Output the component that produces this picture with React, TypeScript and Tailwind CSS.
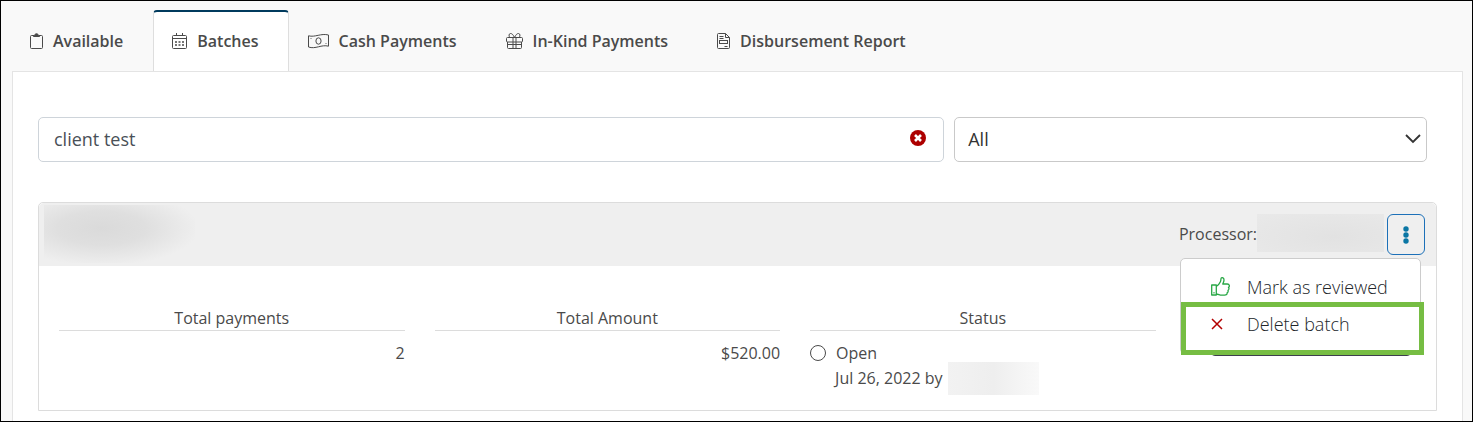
import React from "react"

interface Tab {
  id: string
  label: string
  icon: React.ReactNode
}

const cn = (...classes: (string | false | undefined)[]) => classes.filter(Boolean).join(" ")

const ClipboardIcon = () => (
  <svg width="13" height="16" viewBox="0 0 13 16" fill="none" stroke="currentColor" aria-hidden="true">
    <path d="M4 2.5H1.5a1 1 0 0 0-1 1v11a1 1 0 0 0 1 1h10a1 1 0 0 0 1-1v-11a1 1 0 0 0-1-1H9" />
    <path d="M3.5 3.5h6v-1h-1.2a1.8 1.8 0 0 0-3.6 0H3.5z" fill="currentColor" />
  </svg>
)

const CalendarIcon = () => (
  <svg width="15" height="16" viewBox="0 0 15 16" fill="none" stroke="currentColor" aria-hidden="true">
    <rect x="0.5" y="2.5" width="14" height="13" rx="1" />
    <path d="M0.5 5.5h14M4.5 0v2.500M10.500 0v2.500" />
    <path d="M3 9h2M6.500 9h2M10 9h2M3 12h2M6.500 12h2M10 12h2" strokeWidth="1.600" />
  </svg>
)

const CashIcon = () => (
  <svg width="21" height="16" viewBox="0 0 21 16" fill="none" stroke="currentColor" aria-hidden="true">
    <path d="M.5 2.800C7 4.600 13 0 20.500 2v11.200C13.500 11.200 7.500 16.500 .5 14z" />
    <ellipse cx="10.500" cy="8" rx="2.600" ry="3.200" />
    <path d="M3 5v.8M18 10.200v.8" />
  </svg>
)

const GiftIcon = () => (
  <svg width="17" height="16" viewBox="0 0 17 16" fill="none" stroke="currentColor" aria-hidden="true">
    <rect x="0.500" y="4.500" width="16" height="4.500" rx="1" />
    <path d="M1.500 9v5.500a1 1 0 0 0 1 1h12a1 1 0 0 0 1-1V9M7 4.500v11M10 4.500v11M1.500 11.500h14" />
    <path d="M8.500 4.500C7 1.500 6 .5 4.500.5S2.300 3 4 4.500M8.500 4.500C10 1.500 11 .5 12.500.5s2.200 2.500.5 4" />
  </svg>
)

const ReportIcon = () => (
  <svg width="13" height="16" viewBox="0 0 13 16" fill="none" stroke="currentColor" aria-hidden="true">
    <path d="M1.500.5h7l4 4v10a1 1 0 0 1-1 1h-10a1 1 0 0 1-1-1v-13a1 1 0 0 1 1-1z" />
    <path d="M8.500.5v4h4M2.500 3.500h4M2.500 5.500h4M7.500 13.500h3" />
    <rect x="2.500" y="7.500" width="8" height="3" />
  </svg>
)

const ThumbsUpIcon = () => (
  <svg width="19" height="19" viewBox="0 0 19 19" fill="none" stroke="currentColor" strokeWidth="1.300" strokeLinejoin="round" aria-hidden="true">
    <path d="M.7 8h4.600v10H.7zM5.300 9.500C8 8 8.800 6 9.500 4.500c.6-1.300.2-3 .8-3.600.8-.6 2.700-.1 2.700 2.100 0 1.800-1 2.900-1.200 4h4.500c2.400 0 2.500 2.700 1.200 3.400.8 1 .5 2.300-.5 2.900.4 1.300-.1 2.100-.9 2.500.2 1.500-.8 2.400-2.500 2.400h-2.800c-2.200 0-3.500-1.200-5.500-1.200" />
    <path d="M3 15.600v.3" strokeLinecap="round" />
  </svg>
)

const CrossIcon = () => (
  <svg width="12" height="12" viewBox="0 0 12 12" fill="none" stroke="currentColor" strokeWidth="1.500" aria-hidden="true">
    <path d="M1 1l10 10M11 1L1 11" />
  </svg>
)

const tabs: Tab[] = [
  { id: "available", label: "Available", icon: <ClipboardIcon /> },
  { id: "batches", label: "Batches", icon: <CalendarIcon /> },
  { id: "cash", label: "Cash Payments", icon: <CashIcon /> },
  { id: "in-kind", label: "In-Kind Payments", icon: <GiftIcon /> },
  { id: "report", label: "Disbursement Report", icon: <ReportIcon /> },
]

const Tabs = () => {
  const [active, setActive] = React.useState("batches")

  return (
    <div role="tablist" className="-ml-px flex h-[61px]">
      {tabs.map((tab) => (
        <button
          key={tab.id}
          role="tab"
          aria-selected={active === tab.id}
          onClick={() => setActive(tab.id)}
          className={cn(
            "flex items-center gap-[10px] whitespace-nowrap rounded-t border-x border-t-2 pb-[2px] pl-[18px] pr-[29px] text-base font-semibold",
            active === tab.id
              ? "border-x-[#dedede] border-t-[#003a5d] bg-white"
              : "border-transparent"
          )}
        >
          {tab.icon}
          {tab.label}
        </button>
      ))}
    </div>
  )
}

const Filters = () => {
  const [search, setSearch] = React.useState("client test")

  return (
    <div className="mr-[10px] flex gap-[10px] text-lg">
      <div className="relative flex-[23]">
        <input
          type="text"
          aria-label="Search batches"
          value={search}
          onChange={(e) => setSearch(e.target.value)}
          className="h-[45px] w-full rounded-[5px] border border-[#ced4da] bg-white pb-[2px] pl-[15px] pr-12 text-[#495057]"
        />
        <button aria-label="Clear search" onClick={() => setSearch("")} className="absolute right-[18px] top-[13px]">
          <svg width="16" height="16" viewBox="0 0 16 16" aria-hidden="true">
            <circle cx="8" cy="8" r="8" fill="#ad0000" />
            <path d="M5 5l6 6M11 5l-6 6" stroke="white" strokeWidth="2.600" />
          </svg>
        </button>
      </div>
      <div className="relative flex-[12]">
        <select
          aria-label="Batch status"
          className="h-[45px] w-full appearance-none rounded-[5px] border border-[#c9c9c9] bg-white px-[13px] pb-[2px] text-[#333]"
        >
          <option>All</option>
          <option>Open</option>
        </select>
        <svg className="pointer-events-none absolute right-[6px] top-[17px]" width="16" height="10" viewBox="0 0 16 10" fill="none" stroke="#333" strokeWidth="1.800" aria-hidden="true">
          <path d="M1 1l7 7 7-7" />
        </svg>
      </div>
    </div>
  )
}

const BatchMenu = () => (
  <div className="relative">
    <button
      aria-label="Batch actions"
      aria-haspopup="menu"
      className="flex h-[41px] w-[38px] items-center justify-center rounded-md border border-[#1c70b8]"
    >
      <svg width="6" height="18" viewBox="0 0 6 18" fill="#0a76a4" aria-hidden="true">
        <circle cx="3" cy="3" r="2.700" />
        <circle cx="3" cy="9" r="2.700" />
        <circle cx="3" cy="15" r="2.700" />
      </svg>
    </button>
    <div
      role="menu"
      className="absolute right-1 top-[44px] z-10 flex w-[241px] flex-col rounded-[5px] border border-[#ccc] bg-white pb-[11px] pt-[9px] text-lg font-light text-[#212529]"
    >
      <button role="menuitem" className="flex h-[37px] items-center pl-[30px]">
        <span className="w-9 text-[#28a745]">
          <ThumbsUpIcon />
        </span>
        Mark as reviewed
      </button>
      <button role="menuitem" className="flex h-[37px] items-center pl-[30px]">
        <span className="w-9 text-[#b30000]">
          <CrossIcon />
        </span>
        Delete batch
      </button>
      <div className="pointer-events-none absolute -right-[4px] left-0 top-[43px] h-[53px] border-[5px] border-[#76bd43]" />
    </div>
  </div>
)

const BatchCard = () => (
  <section className="rounded-t-[5px] border border-[#dcdcdc]">
    <header className="flex h-[63px] justify-between rounded-t-[5px] bg-[#efefef]">
      <div className="ml-[5px] mt-[2px] h-[58px] w-[151px] bg-[radial-gradient(ellipse_65%_65%_at_38%_40%,#dadada,#dfdfdf_45%,#efefef)]" />
      <div className="flex items-start pr-[11px] pt-[11px]">
        <span className="leading-10">Processor:</span>
        <div className="mr-[3px] h-[38px] w-[127px] bg-[radial-gradient(ellipse_at_60%_60%,#e2e2e2,#e9e9e9)]" />
        <BatchMenu />
      </div>
    </header>
    <div className="grid h-[144px] grid-cols-[3fr_3fr_3fr_2fr] gap-[30px] px-5 pt-10">
      <div>
        <h3 className="border-b border-[#dcdcdc] text-center">Total payments</h3>
        <p className="pt-[10px] text-right">2</p>
      </div>
      <div>
        <h3 className="border-b border-[#dcdcdc] text-center">Total Amount</h3>
        <p className="pt-[10px] text-right">$520.00</p>
      </div>
      <div>
        <h3 className="border-b border-[#dcdcdc] text-center">Status</h3>
        <p className="flex items-center gap-[10px] pt-[10px]">
          <svg width="16" height="16" viewBox="0 0 16 16" fill="none" stroke="currentColor" aria-hidden="true">
            <circle cx="8" cy="8" r="7.500" />
          </svg>
          Open
        </p>
        <div className="flex pl-[25px]">
          <span className="whitespace-nowrap leading-[26px]">Jul 26, 2022 by</span>
          <div className="-mt-[3px] ml-[5px] h-[33px] w-[91px] bg-linear-to-r from-[#f2f2f2] via-[#eeeeee] to-[#f9f9f9]" />
        </div>
      </div>
      <div className="pl-6 pr-1 pt-[11px]">
        <button aria-label="View batch" className="h-[39px] w-full rounded-[5px] bg-[#3c3e4d]" />
      </div>
    </div>
  </section>
)

const App: React.FC = () => (
  <div className="flex min-h-screen flex-col border border-black bg-[#f9f9f9] px-[11px] pt-[9px] font-['Open_Sans','Noto_Sans',sans-serif] text-base text-[#4a4a4a] [&_button]:cursor-pointer">
    <Tabs />
    <main className="-mr-[2px] flex flex-1 flex-col gap-10 border-x border-t border-[#e4e4e4] bg-white px-[25px] pb-[10px] pt-[45px]">
      <Filters />
      <BatchCard />
    </main>
  </div>
)

export default App
